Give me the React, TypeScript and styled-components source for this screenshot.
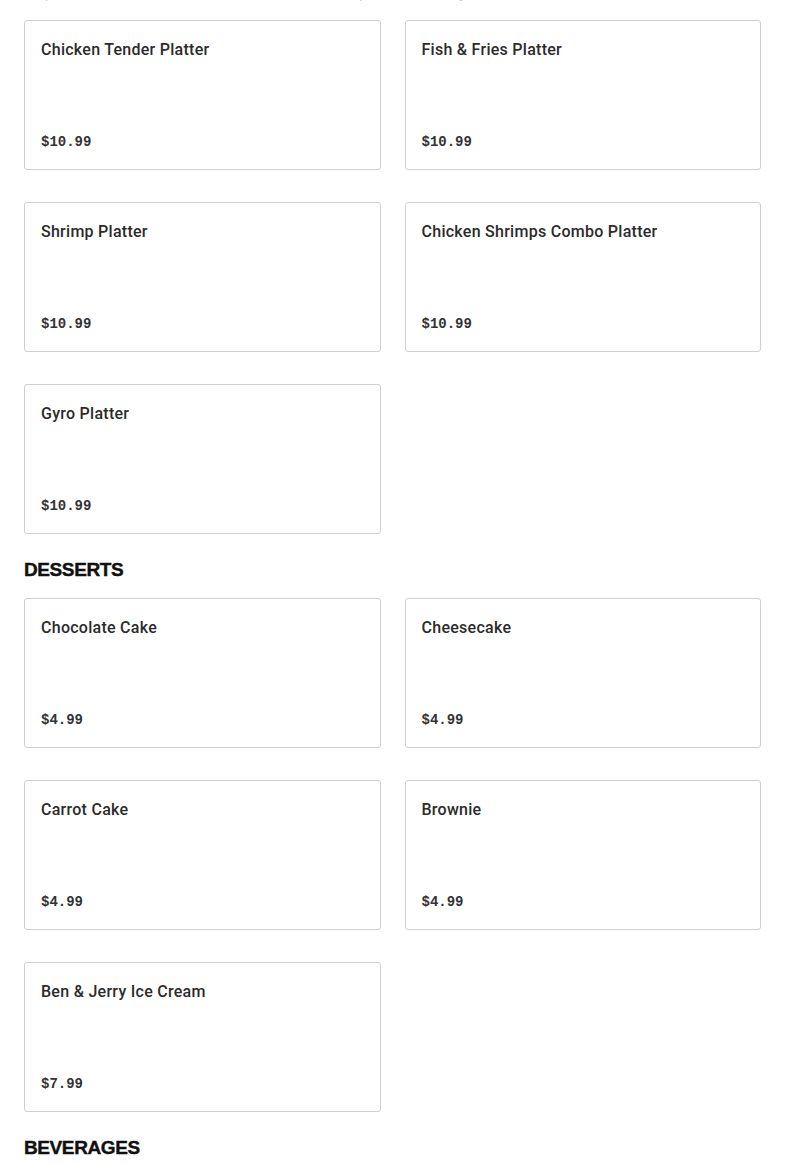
import React from "react";
import styled, { createGlobalStyle } from "styled-components";

const GlobalStyle = createGlobalStyle`
  html, body { margin: 0; padding: 0; background: #ffffff; }
  body { font-family: "Liberation Sans", Arial, sans-serif; }
`;

const Page = styled.div`
  padding: 0 24px;
  overflow: hidden;
`;

const Intro = styled.p`
  margin: -17px 0 0;
  height: 20px;
  font-size: 15px;
  line-height: 20px;
  color: #c9c9c9;
  white-space: nowrap;
`;

const Section = styled.section`
  display: flex;
  flex-direction: column;
`;

const Heading = styled.h2`
  margin: 24px 0 16px;
  font-family: "Liberation Sans", Arial, sans-serif;
  font-weight: 900;
  font-size: 19px;
  line-height: 24px;
  letter-spacing: -0.4px;
  color: #111;
  text-transform: uppercase;
  -webkit-text-stroke: 0.4px #111;
`;

const Grid = styled.div<{ $first?: boolean }>`
  display: grid;
  grid-template-columns: 1fr 1fr;
  column-gap: 24px;
  row-gap: 32px;
  margin-top: ${(p) => (p.$first ? "17px" : "0")};
`;

const Card = styled.div`
  height: 150px;
  box-sizing: border-box;
  border: 1px solid #cfcfcf;
  border-radius: 3px;
  padding: 17px 16px;
  display: flex;
  flex-direction: column;
  justify-content: space-between;
  background: #fff;
`;

const Title = styled.div`
  font-family: Roboto, "Liberation Sans", sans-serif;
  font-weight: 500;
  font-size: 16px;
  line-height: 24px;
  letter-spacing: 0.27px;
  color: #2b2b2b;
`;

const Price = styled.div`
  font-family: "Liberation Mono", "Courier New", monospace;
  font-weight: 700;
  font-size: 14px;
  line-height: 20px;
  color: #333;
`;

type Item = { name: string; price: string };

const platters: Item[] = [
  { name: "Chicken Tender Platter", price: "$10.99" },
  { name: "Fish & Fries Platter", price: "$10.99" },
  { name: "Shrimp Platter", price: "$10.99" },
  { name: "Chicken Shrimps Combo Platter", price: "$10.99" },
  { name: "Gyro Platter", price: "$10.99" },
];

const desserts: Item[] = [
  { name: "Chocolate Cake", price: "$4.99" },
  { name: "Cheesecake", price: "$4.99" },
  { name: "Carrot Cake", price: "$4.99" },
  { name: "Brownie", price: "$4.99" },
  { name: "Ben & Jerry Ice Cream", price: "$7.99" },
];

const Cards = ({ items, first }: { items: Item[]; first?: boolean }) => (
  <Grid $first={first}>
    {items.map((it) => (
      <Card key={it.name}>
        <Title>{it.name}</Title>
        <Price>{it.price}</Price>
      </Card>
    ))}
  </Grid>
);

export default function App() {
  return (
    <>
      <GlobalStyle />
      <Page>
        <Section>
          <Intro>
            All platters are served with rice, fresh salad, warm pita bread and your choice of white or hot sauce.
          </Intro>
          <Cards items={platters} first />
        </Section>
        <Section>
          <Heading>Desserts</Heading>
          <Cards items={desserts} />
        </Section>
        <Section>
          <Heading>Beverages</Heading>
        </Section>
      </Page>
    </>
  );
}
